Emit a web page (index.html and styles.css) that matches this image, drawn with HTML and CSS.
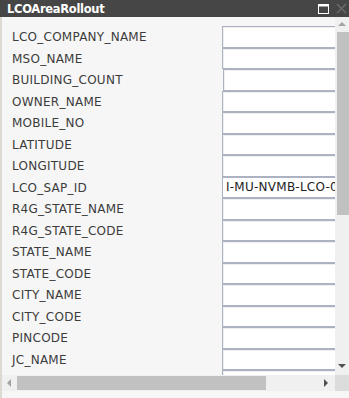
FILE: index.html
```html
<!DOCTYPE html>
<html lang="en">
  <head>
    <meta charset="UTF-8" />
    <meta name="viewport" content="width=device-width, initial-scale=1.0" />
    <title>LCOAreaRollout</title>
    <link rel="stylesheet" href="styles.css">
  </head>
  <body>
    <div class="window">
      <div class="titlebar">
        <span class="title">LCOAreaRollout</span>
        <span class="controls">
          <svg class="btn-max" width="11" height="10" viewBox="0 0 11 10">
            <rect x="0.5" y="0.5" width="10" height="9" fill="none" stroke="#fff" stroke-width="1"/>
            <rect x="0.5" y="0.5" width="10" height="2" fill="#fff"/>
          </svg>
          <svg class="btn-close" width="11" height="11" viewBox="0 0 11 11">
            <path d="M1 1 L10 10 M10 1 L1 10" stroke="#6a6a6a" stroke-width="1.6"/>
          </svg>
        </span>
      </div>
      <div class="frame">
        <div class="viewport">
          <div class="form">
            <label>LCO_COMPANY_NAME</label><div class="field"></div>
            <label>MSO_NAME</label><div class="field"></div>
            <label>BUILDING_COUNT</label><div class="field shift"></div>
            <label>OWNER_NAME</label><div class="field"></div>
            <label>MOBILE_NO</label><div class="field"></div>
            <label>LATITUDE</label><div class="field"></div>
            <label>LONGITUDE</label><div class="field"></div>
            <label>LCO_SAP_ID</label><div class="field filled">I-MU-NVMB-LCO-00014</div>
            <label>R4G_STATE_NAME</label><div class="field"></div>
            <label>R4G_STATE_CODE</label><div class="field"></div>
            <label>STATE_NAME</label><div class="field"></div>
            <label>STATE_CODE</label><div class="field"></div>
            <label>CITY_NAME</label><div class="field"></div>
            <label>CITY_CODE</label><div class="field"></div>
            <label>PINCODE</label><div class="field"></div>
            <label>JC_NAME</label><div class="field"></div>
            <label>JC_CODE</label><div class="field"></div>
          </div>
        </div>
        <div class="vscroll">
          <span class="arrow up"></span>
          <span class="vthumb"></span>
          <span class="vspace"></span>
          <span class="arrow down"></span>
        </div>
        <div class="hscroll">
          <span class="arrow left"></span>
          <span class="hthumb"></span>
          <span class="hspace"></span>
          <span class="arrow right"></span>
        </div>
        <div class="corner"></div>
      </div>
      <div class="footer"></div>
    </div>
  </body>
</html>
```

FILE: styles.css
```css
html, body {
  margin: 0;
  padding: 0;
}
body {
  font-family: "DejaVu Sans", Verdana, sans-serif;
  background: #f6f6f6;
  width: 349px;
  height: 398px;
  overflow: hidden;
}
.window {
  display: flex;
  flex-direction: column;
  height: 398px;
  border-left: 2px solid #dcd9d0;
  box-sizing: border-box;
}
.titlebar {
  height: 17px;
  background: #464646;
  display: flex;
  align-items: center;
  justify-content: space-between;
  margin-left: -2px;
  padding-left: 7px;
}
.title {
  color: #fff;
  font-family: "DejaVu Sans", Verdana, sans-serif;
  font-weight: bold;
  font-size: 11.5px;
  letter-spacing: -0.3px;
}
.controls {
  display: flex;
  align-items: center;
  gap: 7px;
  padding-right: 2px;
}
.btn-max {
  display: block;
}
.btn-close {
  display: block;
}
.frame {
  display: grid;
  grid-template-columns: 1fr 14px;
  grid-template-rows: 358px 16px;
}
.viewport {
  overflow: hidden;
  background: #f6f6f6;
}
.form {
  display: grid;
  grid-template-columns: 210px 130px;
  grid-auto-rows: 21.5px;
  padding: 9px 0 0 10px;
}
.form label {
  font-size: 12px;
  letter-spacing: 0.25px;
  color: #3c3c3c;
  line-height: 21.5px;
  white-space: nowrap;
  padding-top: 1px;
}
.field {
  height: 21.5px;
  box-sizing: border-box;
  background: #fff;
  border: 1px solid #adb2c3;
  box-shadow: inset 2px 2px 0 -1px #efefef;
  font-size: 12px;
  letter-spacing: 0.25px;
  line-height: 19px;
  color: #222;
  white-space: nowrap;
  overflow: hidden;
}
.field.shift {
  margin-left: 1px;
}
.field.filled {
  padding-left: 3px;
  box-shadow: none;
}
.vscroll {
  background: #f0f0f0;
  display: flex;
  flex-direction: column;
  align-items: center;
}
.vthumb {
  width: 12px;
  height: 183px;
  margin-left: 1px;
  background: #c1c1c1;
}
.vspace {
  flex: 1;
}
.hscroll {
  background: #f0f0f0;
  display: flex;
  align-items: center;
}
.hthumb {
  width: 249px;
  height: 14px;
  background: #c1c1c1;
}
.hspace {
  flex: 1;
}
.corner {
  background: #dcdcdc;
}
.arrow {
  display: block;
  width: 0;
  height: 0;
  border: 4px solid transparent;
}
.arrow.up {
  border-bottom-color: #a3a3a3;
  border-top-width: 0;
  margin: 5px 0 6px;
}
.arrow.down {
  border-top-color: #505050;
  border-bottom-width: 0;
  margin: 0 0 7px;
}
.arrow.left {
  border-right-color: #a3a3a3;
  border-left-width: 0;
  margin: 0 6px 0 5px;
}
.arrow.right {
  border-left-color: #505050;
  border-right-width: 0;
  margin: 0 7px 0 0;
}
.footer {
  flex: 1;
  background: #f6f6f6;
}
```
